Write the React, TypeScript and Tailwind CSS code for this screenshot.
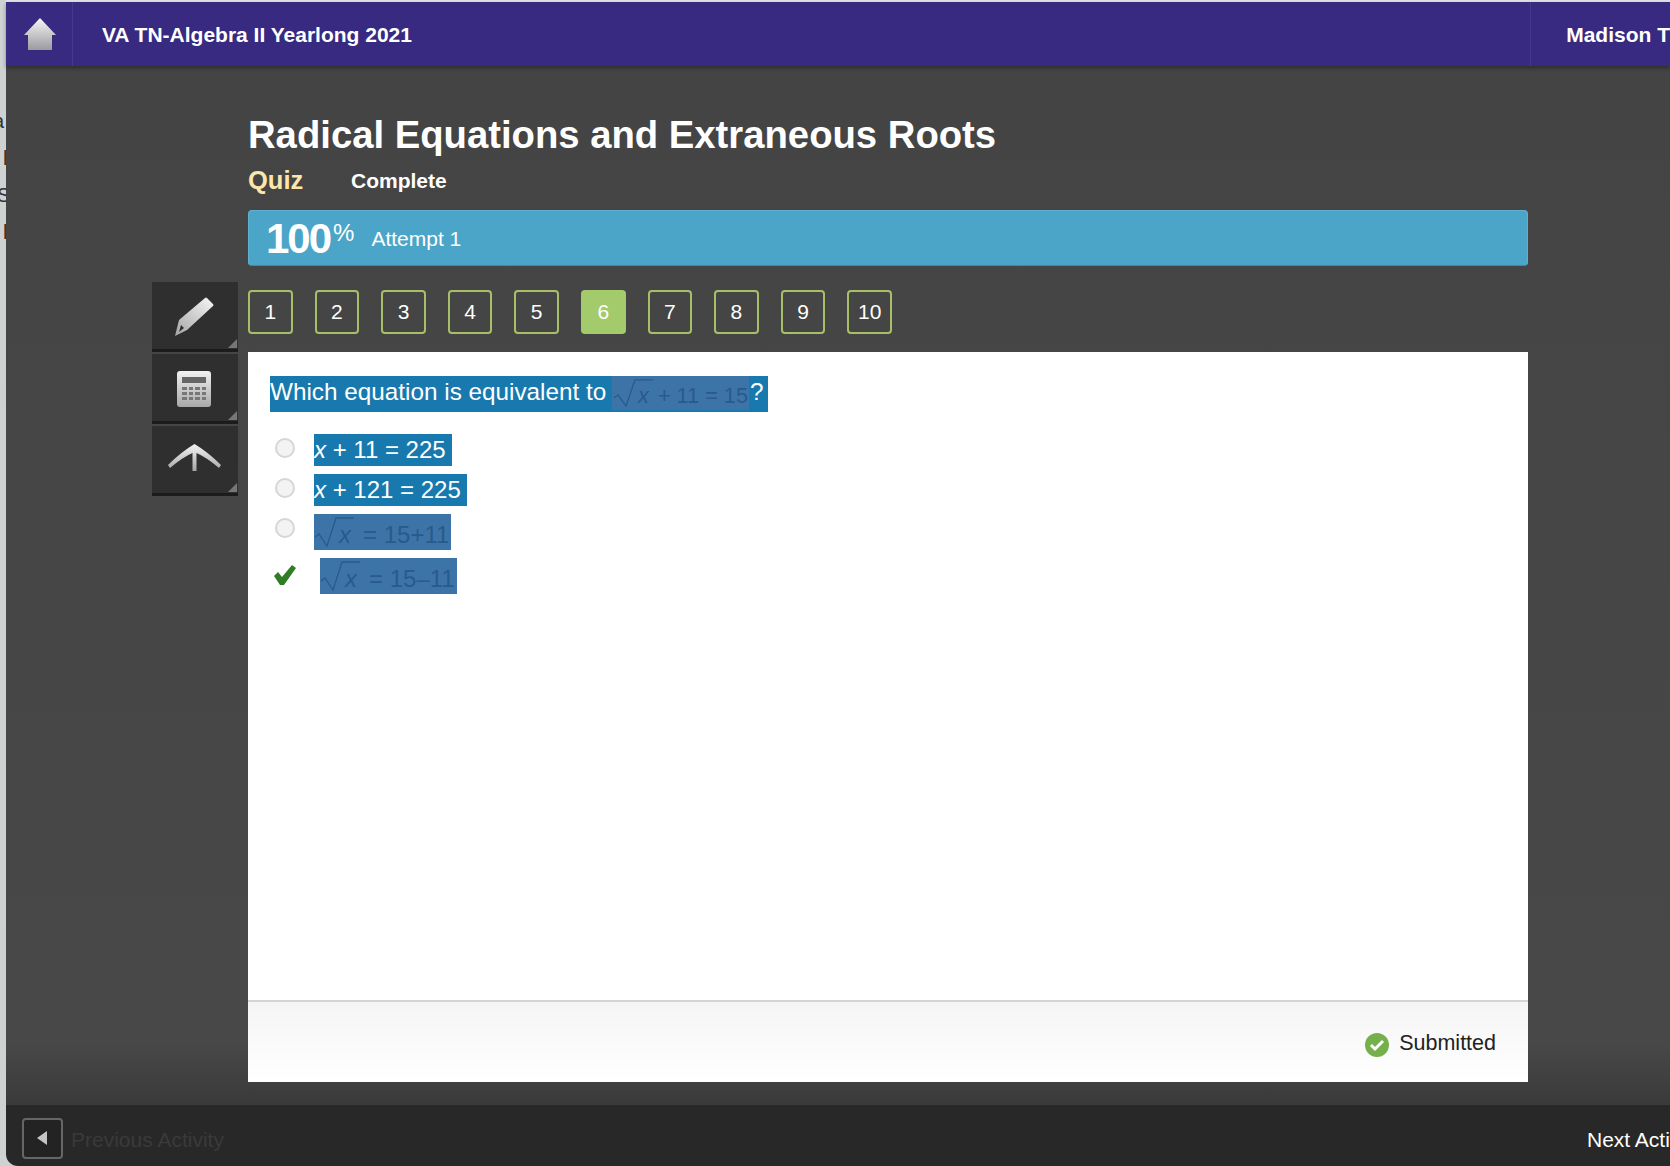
import { ReactNode } from 'react';

const QUESTIONS = ['1', '2', '3', '4', '5', '6', '7', '8', '9', '10'];

function HomeIcon() {
  return (
    <svg width="32" height="32" viewBox="0 0 32 32">
      <defs>
        <linearGradient id="home" x1="0" y1="0" x2="0" y2="1">
          <stop offset="0" stopColor="#f6f6f6" />
          <stop offset="1" stopColor="#9b9a9f" />
        </linearGradient>
      </defs>
      <path d="M16 0 L32 17 L28 17 L28 32 L4 32 L4 17 L0 17 Z" fill="url(#home)" />
    </svg>
  );
}

function PencilIcon() {
  return (
    <svg width="40" height="40" viewBox="0 0 40 40">
      <defs>
        <linearGradient id="pencil" x1="1" y1="0" x2="0" y2="1">
          <stop offset="0" stopColor="#f6f6f6" />
          <stop offset="1" stopColor="#a5a5a5" />
        </linearGradient>
      </defs>
      <path d="M30 1 Q31 0 32 1 L38 7 Q39 8 38 9 L12 33 L0 39 L4 23 Z" fill="url(#pencil)" />
      <path d="M6 28 L9 31 L4 35 Z" fill="#2f2f2f" />
    </svg>
  );
}

function CalculatorIcon() {
  const cells = Array.from({ length: 12 });
  return (
    <div className="flex h-[36px] w-[34px] flex-col gap-[4px] rounded-[3px] bg-gradient-to-b from-[#f2f2f2] to-[#a8a8a8] px-[5px] pt-[6px]">
      <div className="h-[6px] bg-[#666]" />
      <div className="grid grid-cols-4 gap-x-[2px] gap-y-[2px]">
        {cells.map((_, i) => (
          <div key={i} className="h-[3px] bg-[#777]" />
        ))}
      </div>
    </div>
  );
}

function AngleIcon() {
  return (
    <svg width="53" height="27" viewBox="0 0 53 27">
      <defs>
        <linearGradient id="angle" x1="0" y1="0" x2="0" y2="1">
          <stop offset="0" stopColor="#f4f4f4" />
          <stop offset="1" stopColor="#a5a5a5" />
        </linearGradient>
      </defs>
      <path d="M26.5 0 Q40 8 53 21 L51 24 Q38 13 28.5 9 L28.5 27 L24.5 27 L24.5 9 Q15 13 2 24 L0 21 Q13 8 26.5 0 Z" fill="url(#angle)" />
    </svg>
  );
}

function ToolButton({ children, pad }: { children: ReactNode; pad: string }) {
  return (
    <div className={`relative flex h-[70px] w-[86px] items-center justify-center border-b-[3px] border-[#1c1c1c] bg-[#2f2f2f] ${pad}`}>
      {children}
      <div className="absolute bottom-[1px] right-[1px] h-0 w-0 border-b-[9px] border-l-[9px] border-b-[#777] border-l-transparent" />
    </div>
  );
}

function Radical({ width, height }: { width: number; height: number }) {
  return (
    <svg
      width={width}
      height={height}
      viewBox="0 0 40 30"
      preserveAspectRatio="none"
      fill="none"
      stroke="#285a8c"
      strokeWidth="1.3"
      className="mb-[3px] shrink-0"
    >
      <path d="M1 20 L5 17 L13 29 L22 1 L40 1" />
    </svg>
  );
}

function MathImage({ sum }: { sum: string }) {
  return (
    <div className="flex h-[36px] items-end bg-[#3d74a8] pr-[2px] text-[24px] font-light leading-[30px] text-[#285a8c]">
      <Radical width={40} height={30} />
      <span className="-ml-[15px] mr-[12px] italic">x</span>
      <span className="whitespace-pre">{sum}</span>
    </div>
  );
}

function Radio() {
  return <div className="h-[20px] w-[20px] shrink-0 rounded-full border-2 border-[#d6d6d6] bg-[#f3f3f3]" />;
}

function Option({ marker, children, gap }: { marker: ReactNode; children: ReactNode; gap: string }) {
  return (
    <div className="flex items-start">
      <div className="flex w-[30px] shrink-0 justify-center pt-[4px]">{marker}</div>
      <div className={gap}>{children}</div>
    </div>
  );
}

function PlainAnswer({ children }: { children: ReactNode }) {
  return (
    <div className="flex h-[32px] items-center bg-[#1779ae] pr-[6px] text-[24px] text-white">
      <i>x</i>
      <span className="whitespace-pre">{children}</span>
    </div>
  );
}

export default function App() {
  return (
    <div className="flex h-[1166px] w-[1670px] overflow-hidden bg-[#cfd2d2] font-['Liberation_Sans',Arial,sans-serif]">
      {/* window edge, text of the page behind */}
      <div className="w-[6px] shrink-0 overflow-hidden pt-[103px] text-[20px] leading-[37px] text-[#333]">
        <div className="-ml-[7px]">a</div>
        <div className="ml-[3px]">l</div>
        <div className="-ml-[3px]">S</div>
        <div className="ml-[3px]">l</div>
      </div>

      <div className="flex min-w-0 flex-1 flex-col">
        <div className="h-[2px] shrink-0 bg-[#e2e1e6]" />
        <div className="relative z-10 flex h-[64px] shrink-0 items-center bg-[#372a80] shadow-[0_2px_4px_rgba(0,0,0,0.35)]">
          <div className="flex h-full w-[67px] items-center justify-center border-r border-[#45398f] pl-[2px]">
            <HomeIcon />
          </div>
          <div className="ml-[29px] w-[1430px] pt-[2px] text-[21px] font-bold text-white">VA TN-Algebra II Yearlong 2021</div>
          <div className="flex h-full flex-1 items-center whitespace-nowrap border-l border-[#45398f] pl-[35px] pt-[2px] text-[21px] font-bold text-white">
            Madison T
          </div>
        </div>

        <div className="flex min-h-0 flex-1 bg-[linear-gradient(#444_0%,#484848_94%,#3a3a3a_100%)] pl-[146px]">
          <div className="mt-[216px] flex h-fit w-[86px] shrink-0 flex-col gap-[2px]">
            <ToolButton pad="pt-[3px]"><PencilIcon /></ToolButton>
            <ToolButton pad="pr-[2px] pt-[3px]"><CalculatorIcon /></ToolButton>
            <ToolButton pad="pb-[4px] pr-[2px]"><AngleIcon /></ToolButton>
          </div>

          <div className="ml-[10px] flex w-[1280px] flex-col pt-[47px]">
            <h1 className="text-[38.25px] font-bold leading-[44px] text-white">Radical Equations and Extraneous Roots</h1>
            <div className="mt-[6px] flex h-[34px] items-center">
              <span className="w-[103px] text-[25.5px] font-bold text-[#fbe7ab]">Quiz</span>
              <span className="pt-[1px] text-[21px] font-bold text-white">Complete</span>
            </div>
            <div className="mt-[13px] flex h-[56px] items-center rounded-[4px] border border-[#5fb0d0] border-b-[#3c8aab] bg-[#4ba5c9] pl-[17px] pt-[2px] text-white">
              <span className="text-[42px] font-bold leading-none tracking-[-2px]">100</span>
              <span className="mb-[12px] ml-[3px] text-[24px] leading-none">%</span>
              <span className="ml-[17px] text-[21px]">Attempt 1</span>
            </div>

            <div className="mt-[24px] flex h-[44px] gap-[22px]">
              {QUESTIONS.map((q) => (
                <div
                  key={q}
                  className={
                    q === '6'
                      ? 'flex w-[44.6px] items-center justify-center rounded-[4px] bg-[#a3cb6c] text-[21px] text-white'
                      : 'flex w-[44.6px] items-center justify-center rounded-[4px] border-2 border-[#a9bf67] text-[21px] text-white'
                  }
                >
                  {q}
                </div>
              ))}
            </div>

            <div className="mt-[18px] flex h-[730px] flex-col bg-white">
              <div className="flex-1 pl-[22px] pt-[24px]">
                <div className="flex h-[36px] w-fit bg-[#1779ae] pr-[4px] text-[24.3px] text-white">
                  <span className="whitespace-pre leading-[32px]">Which equation is equivalent to </span>
                  <div className="-ml-[1px] mr-[1px] flex h-[34px] w-[137px] items-end bg-[#3d74a8] pl-[1px] text-[21.7px] font-light leading-[28px] text-[#285a8c]">
                    <Radical width={40} height={28} />
                    <span className="-ml-[15px] mr-[9px] italic">x</span>
                    <span className="whitespace-pre">+ 11 = 15</span>
                  </div>
                  <span className="leading-[32px]">?</span>
                </div>

                <div className="mt-[22px] flex flex-col gap-[8px]">
                  <Option marker={<Radio />} gap="ml-[14px]">
                    <PlainAnswer> + 11 = 225</PlainAnswer>
                  </Option>
                  <Option marker={<Radio />} gap="ml-[14px]">
                    <PlainAnswer> + 121 = 225</PlainAnswer>
                  </Option>
                  <Option marker={<Radio />} gap="ml-[14px]">
                    <MathImage sum="= 15+11" />
                  </Option>
                  <Option
                    marker={
                      <svg width="24" height="22" viewBox="0 0 24 22" className="mt-[2px]">
                        <path d="M1 12 L5 8 L9 13 L19 1 L23 4 L11 21 L7 21 Z" fill="#2f7d25" />
                      </svg>
                    }
                    gap="ml-[20px]"
                  >
                    <MathImage sum="= 15–11" />
                  </Option>
                </div>
              </div>

              <div className="flex h-[82px] items-center justify-end border-t-2 border-[#d4d4d4] bg-gradient-to-b from-[#f5f5f5] to-white pr-[32px] pt-[2px] text-[21.5px] text-[#222]">
                <svg width="24" height="24" viewBox="0 0 24 24" className="mr-[10px] mt-[3px]">
                  <circle cx="12" cy="12" r="12" fill="#76b04c" />
                  <path d="M6 12 L10 16 L18 8" fill="none" stroke="#fff" strokeWidth="3" />
                </svg>
                Submitted
              </div>
            </div>
          </div>
        </div>

        <div className="flex h-[61px] shrink-0 items-center justify-between overflow-hidden rounded-bl-[12px] bg-[#282828] pl-[16px] pt-[5px]">
          <div className="flex items-center">
            <div className="flex h-[41px] w-[41px] items-center justify-center rounded-[4px] border-2 border-[#666] bg-[#232323]">
              <div className="mr-[2px] h-0 w-0 border-y-[7px] border-r-[10px] border-y-transparent border-r-[#c5c5c5]" />
            </div>
            <span className="ml-[8px] pt-[4px] text-[21px] text-[#3a3a3a]">Previous Activity</span>
          </div>
          <span className="w-[83px] overflow-hidden whitespace-nowrap pt-[4px] text-[21px] text-white">Next Activity</span>
        </div>
      </div>
    </div>
  );
}
